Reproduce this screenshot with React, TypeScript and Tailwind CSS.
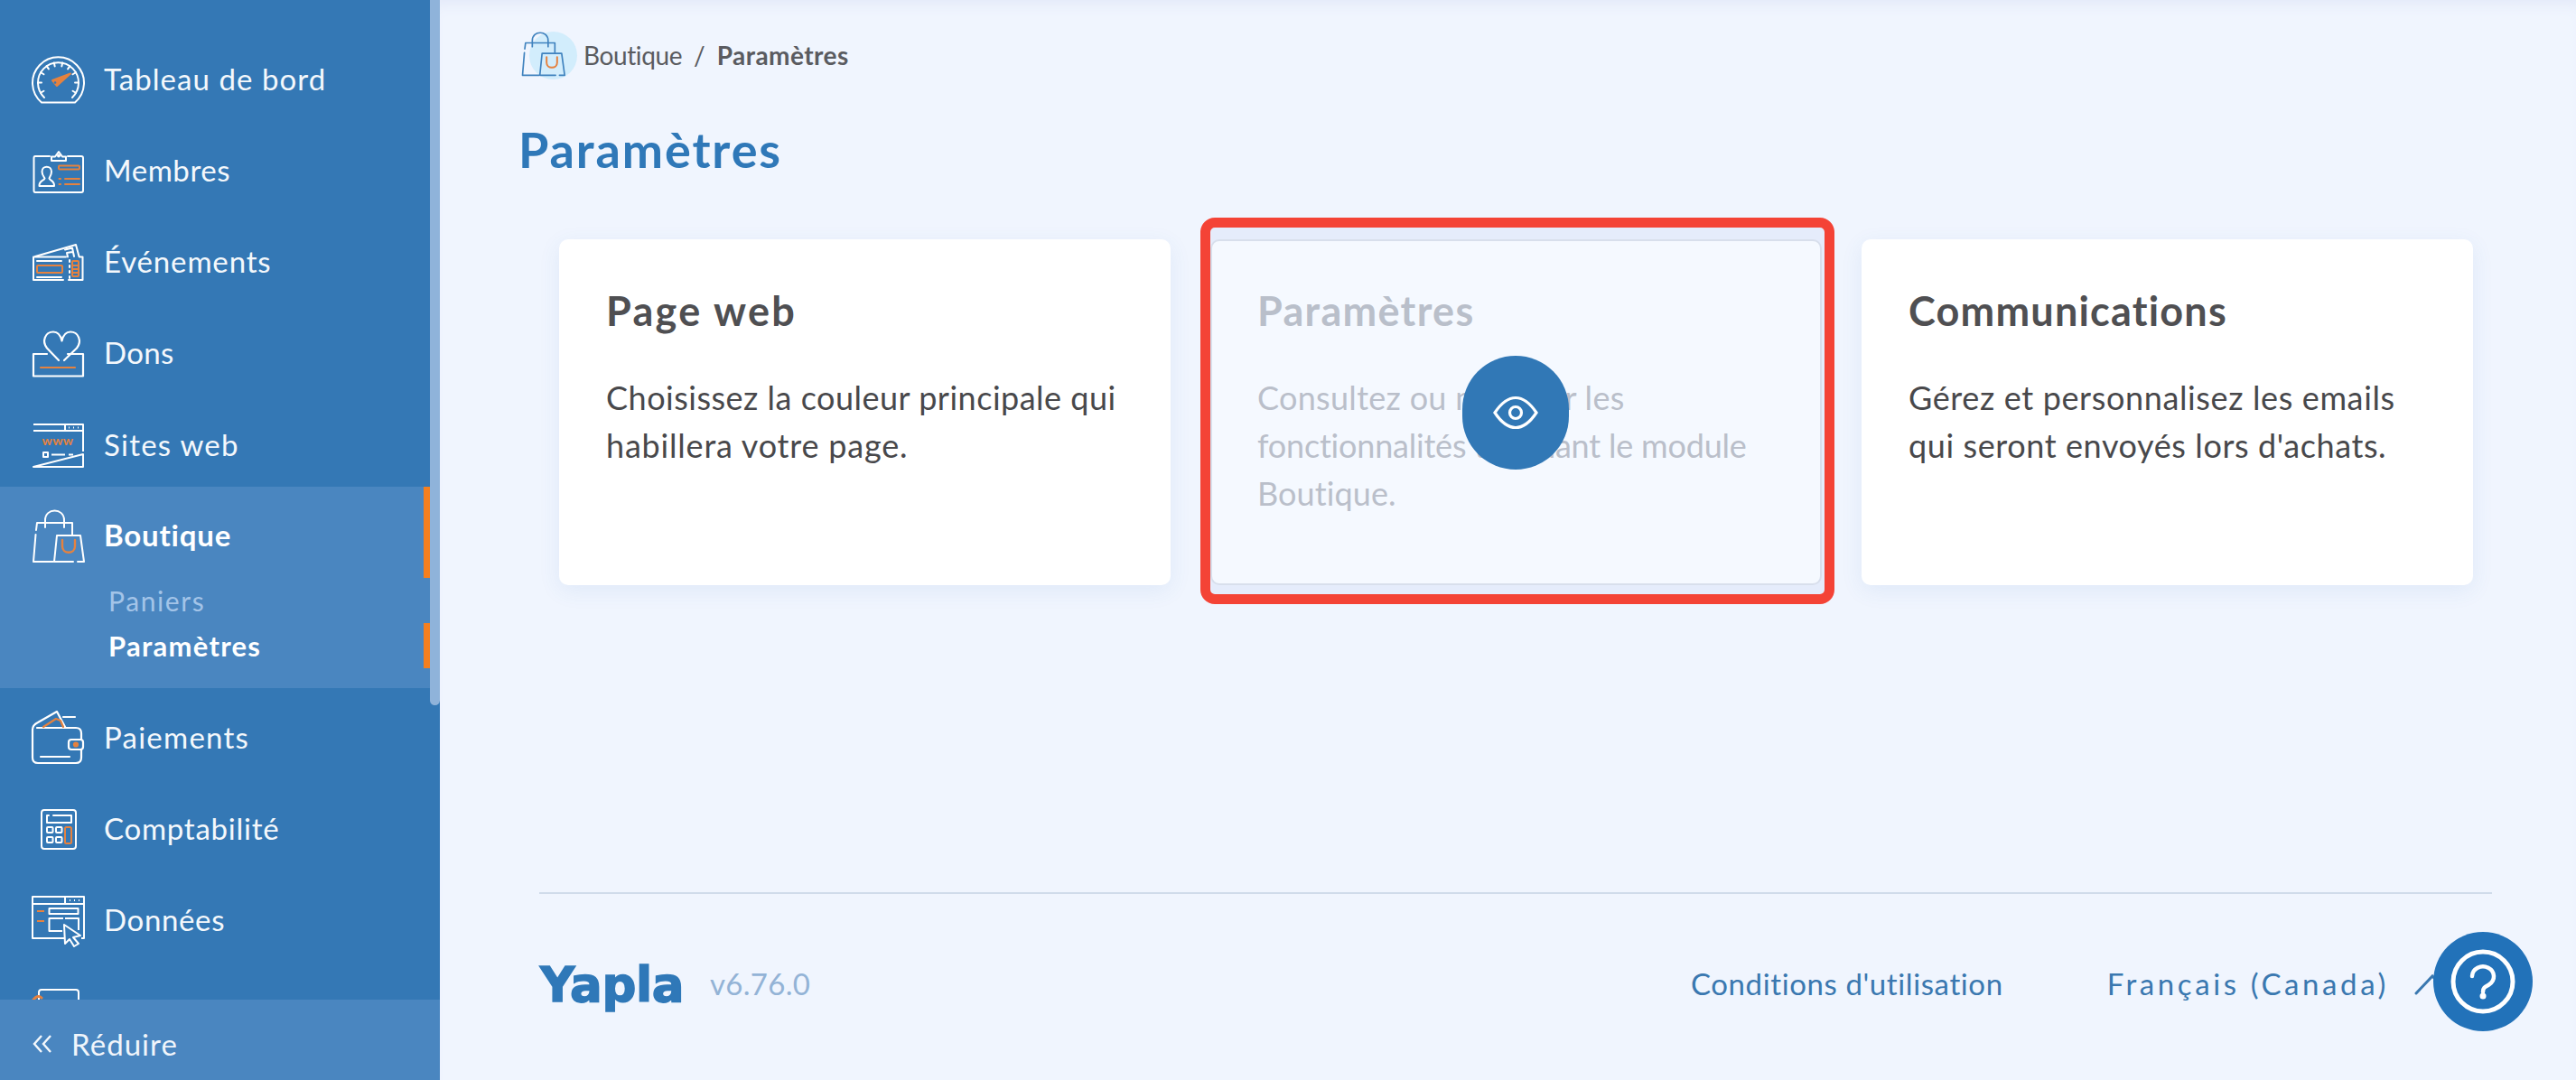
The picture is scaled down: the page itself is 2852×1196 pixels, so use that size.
import React from 'react';

const OR = '#e5823f';

const ticks = [-120, -90, -60, -35, -12, 12, 35, 60, 90, 120];

const Gauge = () => (
  <svg viewBox="0 0 60 60" className="w-[60px] h-[60px]" fill="none" stroke="#fff" strokeWidth="2" strokeLinecap="round" strokeLinejoin="round">
    <path d="M12 55.5 A28.5 28.5 0 1 1 49 55.5 Z" />
    <path d="M15 50 A22.5 22.5 0 1 1 46 50" />
    {ticks.map((a) => {
      const r = (a * Math.PI) / 180;
      const s = Math.sin(r);
      const c = Math.cos(r);
      return <line key={a} x1={30.5 + 22.5 * s} y1={33.5 - 22.5 * c} x2={30.5 + 18.5 * s} y2={33.5 - 18.5 * c} />;
    })}
    <path d="M24 31 L44 23.5 L29 37 Z" fill={OR} stroke={OR} />
    <circle cx="27" cy="33.5" r="1.3" fill="#3478b5" stroke="none" />
  </svg>
);

const Badge = () => (
  <svg viewBox="0 0 60 60" className="w-[60px] h-[60px]" fill="none" stroke="#fff" strokeWidth="2" strokeLinecap="round" strokeLinejoin="round">
    <path d="M21 14 H5 Q3.5 14 3.5 16 V52 Q3.5 54 5 54 H56 Q58 54 58 52 V16 Q58 14 56 14 H41" />
    <path d="M23 19 V14.5 H27 L31 9 L35 14.5 H39 V19 Z" />
    <circle cx="31" cy="13.5" r="1" />
    <path d="M12.5 31 C12.5 24 23 24 23 31 C23 35 21 37 20.5 38.5 C21 41 26.5 41 26 47 H9.5 C9 41 15 41 15.5 38.5 C15 37 12.5 35 12.5 31 Z" />
    <rect x="31" y="24.5" width="23" height="4" rx="1" stroke={OR} />
    <path d="M38 39 H54 M38 45 H54 M31.5 39 H33 M31.5 45 H33" stroke={OR} />
  </svg>
);

const Ticket = () => (
  <svg viewBox="0 0 60 60" className="w-[60px] h-[60px]" fill="none" stroke="#fff" strokeWidth="2" strokeLinecap="round" strokeLinejoin="round">
    <path d="M39 23.5 H3 V49 H36 M42 49 H57.5 V23.5 H54" />
    <path d="M5 23 L50 10 L53.5 23" />
    <path d="M38 15.5 L46 13.5 L48 23 M41 23.5 L40 19 L46 18" />
    <path d="M7 28 H34 M7 46 H34 M43 27 V29 M43 33 V35 M43 39 V41 M43 45 V47" />
    <rect x="7" y="33" width="28" height="8" rx="1" stroke={OR} />
    <rect x="46" y="28" width="7" height="17" rx="1" stroke={OR} />
    <path d="M46 33 H53 M46 37 H53 M46 41 H53" stroke={OR} />
  </svg>
);

const Heart = () => (
  <svg viewBox="0 0 60 60" className="w-[60px] h-[60px]" fill="none" stroke="#fff" strokeWidth="2.2" strokeLinecap="round" strokeLinejoin="round">
    <path d="M18 30 H3 V54.5 H58 V30 H41" />
    <path d="M31 37 L18 23.5 C12 16 16 5.5 25 5.5 C30 5.5 33 9 34.5 15.5 C36 9 39 5.5 44 5.5 C53 5.5 57 16 51 23.5 L37 37" />
    <path d="M11 45 H49" stroke={OR} />
  </svg>
);

const Web = () => (
  <svg viewBox="0 0 60 60" className="w-[60px] h-[60px]" fill="none" stroke="#fff" strokeWidth="2" strokeLinejoin="round">
    <path d="M3 7 H58 V37 M58 40 V54 H3 Z M3 14 H58 M38 7 V14" />
    <path d="M42 10.5 H43 M47 10.5 H48 M52 10.5 H53" />
    <text x="30" y="30" textAnchor="middle" fontSize="14" fontWeight="700" fill={OR} stroke="none" letterSpacing="0.5" fontFamily="Lato, sans-serif">www</text>
    <rect x="14" y="38" width="5" height="5" />
    <path d="M23 40.5 H38 M42 40.5 H47" />
  </svg>
);

const Bag = ({ line = '#fff' }: { line?: string }) => (
  <svg viewBox="0 0 60 60" className="w-full h-full" fill="none" stroke={line} strokeWidth="2" strokeLinecap="round" strokeLinejoin="round">
    <path d="M7 15 H46 V28 M7 15 L6 23 M5.5 28 L3 58 H25" />
    <path d="M16 20 V12 C16 -2 37 -2 37 12 V20" />
    <path d="M29 29 H55 L59 58 H52 M47 58 H26 L29 29" />
    <path d="M35 34 V41 C35 50 49 50 49 41 V34" stroke={OR} strokeWidth="2.4" />
  </svg>
);

const Wallet = () => (
  <svg viewBox="0 0 60 60" className="w-[60px] h-[60px]" fill="none" stroke="#fff" strokeWidth="2.2" strokeLinecap="round" strokeLinejoin="round">
    <path d="M7 19 H50 Q56 19 56 25 V32 M56 43 V52 Q56 58 50 58 H8 Q2 58 2 52 V21 C2 17 4 15 8 13 L29 1 L38 18 M36 7 H49" />
    <path d="M14 18 L28 9 L33 11 L36 18" stroke={OR} />
    <rect x="42" y="32" width="16" height="11" rx="3" />
    <circle cx="50" cy="37.5" r="2" fill={OR} stroke={OR} />
    <path d="M11 51 H43" />
  </svg>
);

const Calc = () => (
  <svg viewBox="0 0 60 60" className="w-[60px] h-[60px]" fill="none" stroke="#fff" strokeWidth="2" strokeLinecap="round" strokeLinejoin="round">
    <rect x="12" y="8" width="38" height="43" rx="3" />
    <path d="M20 14 H18 V22 H45 V14 H25" />
    <rect x="18" y="27" width="6.5" height="6" rx="1" />
    <rect x="28" y="27" width="6.5" height="6" rx="1" />
    <rect x="18" y="38" width="6.5" height="6" rx="1" />
    <rect x="28" y="38" width="6.5" height="6" rx="1" />
    <rect x="38" y="27" width="7" height="18" rx="1.5" stroke={OR} />
  </svg>
);

const Data = () => (
  <svg viewBox="0 0 60 60" className="w-[60px] h-[60px]" fill="none" stroke="#fff" strokeWidth="2" strokeLinejoin="round">
    <path d="M37 49 H2 V3 H59 V49 H56 M2 11 H59 M38 3 V11" />
    <path d="M43 7 H44 M48 7 H49 M53 7 H54" />
    <path d="M7 19 H15 M7 30 H15" stroke={OR} />
    <rect x="20.5" y="16" width="32" height="6" />
    <path d="M38 27 H53 V40 M35 41 H20.5 V27 H36" />
    <path d="M37 34 L55 46 L47 48 L53 55 L48 58 L43 50 L38 55 Z" fill="#3478b5" />
  </svg>
);

const Clipped = () => (
  <svg viewBox="0 0 60 60" className="w-[60px] h-[60px]" fill="none" stroke="#fff" strokeWidth="2" strokeLinecap="round">
    <path d="M9 20 V8 Q9 5 12 5 H50 Q53 5 53 8 V30" />
    <path d="M3 16 Q8 10 12 14" stroke={OR} strokeWidth="3" />
  </svg>
);

const items = [
  { label: 'Tableau de bord', icon: <Gauge />, track: 'tracking-[1.05px]' },
  { label: 'Membres', icon: <Badge />, track: 'tracking-[0.55px]' },
  { label: 'Événements', icon: <Ticket />, track: 'tracking-[0.85px]' },
  { label: 'Dons', icon: <Heart />, track: 'tracking-[0.35px]' },
  { label: 'Sites web', icon: <Web />, track: 'tracking-[1.25px]' },
];

const itemsAfter = [
  { label: 'Paiements', icon: <Wallet />, track: 'tracking-[1.25px]' },
  { label: 'Comptabilité', icon: <Calc />, track: 'tracking-[0.75px]' },
  { label: 'Données', icon: <Data />, track: 'tracking-[0.65px]' },
  { label: '', icon: <Clipped />, track: '' },
];

const NavRow = ({ label, icon, track }: { label: string; icon: React.ReactNode; track: string }) => (
  <div className="h-[101.25px] pt-[9px] pl-[34px] flex items-center gap-[21px] shrink-0">
    <div className="w-[60px] h-[60px] shrink-0">{icon}</div>
    <span className={`text-[33px] mb-[2px] text-[#f4f8fc] leading-none ${track}`}>{label}</span>
  </div>
);

// per-line tracking: Lato runs narrower than the original face, and not evenly
const cards = [
  {
    title: 'Page web',
    titleTrack: 'tracking-[2.3px]',
    lines: [
      { t: 'Choisissez la couleur principale qui', c: 'tracking-[0.5px]' },
      { t: 'habillera votre page.', c: 'tracking-[0.8px]' },
    ],
  },
  {
    title: 'Paramètres',
    titleTrack: 'tracking-[1.3px]',
    active: true,
    lines: [
      { t: 'Consultez ou modifier les', c: 'tracking-[0.3px]' },
      { t: 'fonctionnalités touchant le module', c: 'tracking-[-0.2px]' },
      { t: 'Boutique.', c: 'tracking-[0.1px]' },
    ],
  },
  {
    title: 'Communications',
    titleTrack: 'tracking-[1.2px]',
    lines: [
      { t: 'Gérez et personnalisez les emails', c: 'tracking-[0.63px]' },
      { t: "qui seront envoyés lors d'achats.", c: 'tracking-[0.6px]' },
    ],
  },
];

export default function App() {
  return (
    <div className="flex h-[1196px] w-[2852px] overflow-hidden bg-[#f0f5fe] font-['Lato',sans-serif]">
      <aside className="relative w-[487px] h-full shrink-0 flex flex-col bg-[#3478b5]">
        <nav className="flex-1 overflow-hidden pt-[33px] flex flex-col">
          {items.map((it) => (
            <NavRow key={it.label} label={it.label} icon={it.icon} track={it.track} />
          ))}
          <div className="bg-[#4a86c0] mr-[11px] shrink-0 pb-[22px] relative">
            <div className="h-[101px] pt-[9px] pl-[34px] flex items-center gap-[21px] border-r-[7px] border-[#f47f20]">
              <div className="w-[60px] h-[60px] shrink-0"><Bag /></div>
              <span className="text-[33px] mb-[3px] font-bold tracking-[0.8px] text-white leading-none">Boutique</span>
            </div>
            <div className="h-[50px] pl-[120px] flex items-center text-[30px] tracking-[1.6px] text-[#a3c4e8]">Paniers</div>
            <div className="h-[50px] pl-[120px] flex items-center text-[31px] font-bold tracking-[1.25px] text-white border-r-[7px] border-[#f47f20]">Paramètres</div>
          </div>
          {itemsAfter.map((it) => (
            <NavRow key={it.label || 'clip'} label={it.label} icon={it.icon} track={it.track} />
          ))}
        </nav>
        <div className="h-[89px] shrink-0 bg-[#4a86c0] pl-[36px] pt-[9px] flex items-center gap-[21px] relative">
          <svg viewBox="0 0 22 20" className="w-[22px] h-[20px]" fill="none" stroke="#f4f8fc" strokeWidth="2.4">
            <path d="M10 1 L2 10 L10 19 M20 1 L12 10 L20 19" />
          </svg>
          <span className="text-[33px] tracking-[1.05px] text-[#f0f5fb] leading-none">Réduire</span>
        </div>
        <div className="absolute top-0 right-0 w-[11px] h-[781px] rounded-b-full bg-[#8fb3da]" />
      </aside>

      <main className="flex-1 min-w-0 flex flex-col shadow-[inset_0_14px_16px_-10px_#e2e8f8]">
        <div className="mt-[34px] pl-[89px] h-[53px] flex items-center">
          <div className="relative w-[60px] h-[53px] shrink-0">
            <div className="absolute left-[10px] top-[1px] w-[53px] h-[53px] rounded-full bg-[#d2edfc]" />
            <div className="absolute left-0 top-0 w-[50px] h-[52px]"><Bag line="#3f82be" /></div>
          </div>
          <div className="ml-[10px] flex items-center text-[28px] text-[#5a5b60] leading-none">
            <span className="tracking-[-0.4px]">Boutique</span>
            <span className="mx-[13px]">/</span>
            <span className="font-bold tracking-[0.45px]">Paramètres</span>
          </div>
        </div>

        <h1 className="mt-[49px] pl-[87px] text-[54px] leading-[60px] font-bold tracking-[1.9px] text-[#2f78b8]">Paramètres</h1>

        <div className="mt-[69px] ml-[132px] w-[2119px] grid grid-cols-3 gap-x-[44px]">
          {cards.map((c) => (
            <div key={c.title} className="relative">
              {c.active && (
                <div className="absolute -left-[11px] -right-[14px] -top-[24px] -bottom-[21px] rounded-[16px] border-[11px] border-[#f44336] bg-[#e5ecfb] z-0" />
              )}
              <div
                className={
                  c.active
                    ? 'relative h-[383px] rounded-[10px] border-2 border-[#d8dfec] bg-[#f5f9ff] px-[50px] pt-[47px]'
                    : 'relative h-[383px] rounded-[10px] bg-white px-[52px] pt-[49px] shadow-[0_6px_24px_rgba(60,110,190,0.09)]'
                }
              >
                <h2 className={`text-[45px] leading-[60px] font-bold ${c.titleTrack} ${c.active ? 'text-[#b9bfca]' : 'text-[#4f4f52]'}`}>
                  {c.title}
                </h2>
                <div className={`mt-[40px] text-[36px] leading-[53px] ${c.active ? 'text-[#babfca]' : 'text-[#48484b]'}`}>
                  {c.lines.map((l) => (
                    <p key={l.t} className={`whitespace-nowrap ${l.c}`}>{l.t}</p>
                  ))}
                </div>
              </div>
              {c.active && (
                <div className="absolute left-[279px] top-[129px] w-[118px] h-[126px] rounded-full bg-[#3178b6] flex items-center justify-center">
                  <svg viewBox="0 0 50 38" className="w-[50px] h-[38px]" fill="none" stroke="#fff" strokeWidth="3.2">
                    <path d="M2 19 C10 7 17 2.5 25 2.5 C33 2.5 40 7 48 19 C40 31 33 35.5 25 35.5 C17 35.5 10 31 2 19 Z" />
                    <circle cx="25" cy="19" r="6.5" />
                  </svg>
                </div>
              )}
            </div>
          ))}
        </div>

        <footer className="mt-auto ml-[110px] w-[2162px] h-[208px] border-t-2 border-[#d0dbea] flex items-center pb-[6px]">
          <span className="font-['DejaVu_Sans',sans-serif] text-[53px] leading-none font-bold text-[#2f78b8] tracking-[-0.4px] pl-[1px] [-webkit-text-stroke:1.5px_#2f78b8] w-[189px]">Yapla</span>
          <span className="text-[33px] tracking-[0.3px] text-[#93b3d6]">v6.76.0</span>
          <span className="ml-auto text-[33px] tracking-[0.6px] text-[#3a78b0]">Conditions d'utilisation</span>
          <span className="ml-[115px] text-[33px] tracking-[3.6px] text-[#3a78b0]">Français (Canada)</span>
          <svg viewBox="0 0 40 24" className="ml-[28px] mr-[46px] w-[40px] h-[24px]" fill="none" stroke="#3a78b0" strokeWidth="3" strokeLinecap="round">
            <path d="M2 22 L20 3 L38 22" />
          </svg>
        </footer>
      </main>

      <button className="absolute left-[2694px] top-[1032px] w-[110px] h-[110px] rounded-full bg-[#2272b9]">
        <svg viewBox="0 0 110 110" className="w-[110px] h-[110px]" fill="none" stroke="#fff" strokeWidth="5">
          <circle cx="55" cy="55" r="33" />
          <path d="M43 49 a12 11 0 1 1 18.5 9.5 c-4.5 2.5 -6.5 3.5 -6.5 8" strokeLinecap="round" strokeWidth="4.5" />
          <circle cx="55" cy="71" r="3.5" fill="#fff" stroke="none" />
        </svg>
      </button>
    </div>
  );
}
